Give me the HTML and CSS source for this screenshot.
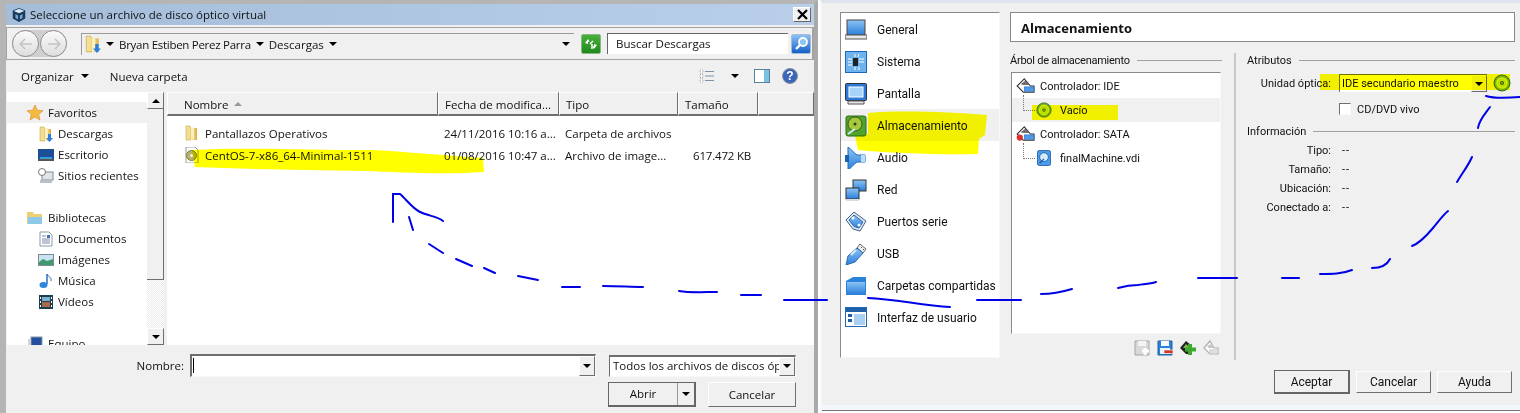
FILE: index.html

```html
<!DOCTYPE html>
<html lang="es">
<head>
  <meta charset="UTF-8" />
  <title>Seleccione un archivo de disco óptico virtual</title>
  <link rel="stylesheet" href="styles.css">
</head>
<body>

<svg class="defs" width="0" height="0">
  <defs>
    <linearGradient id="folderFill" x1="0" y1="0" x2="1" y2="0">
      <stop offset="0" stop-color="#f6e7a6"/><stop offset="0.6" stop-color="#e9c968"/><stop offset="1" stop-color="#d4ab45"/>
    </linearGradient>
    <linearGradient id="blueFill" x1="0" y1="0" x2="0" y2="1">
      <stop offset="0" stop-color="#8cc4f4"/><stop offset="1" stop-color="#2a7fdc"/>
    </linearGradient>
    <radialGradient id="discFill">
      <stop offset="0" stop-color="#f4f7a0"/><stop offset="0.55" stop-color="#a6d63c"/><stop offset="1" stop-color="#5f9e1c"/>
    </radialGradient>
    <symbol id="folder" viewBox="0 0 16 16">
      <path d="M2 1h4l1 2v12H2z" fill="#f3dd8f" stroke="#c9a84e" stroke-width="0.6"/>
      <path d="M7 3h6v12H7z" fill="url(#folderFill)"/>
      <path d="M7 3l3-1v12l-3 1z" fill="#fbf0bd"/>
    </symbol>
    <symbol id="disc" viewBox="0 0 18 18">
      <circle cx="9" cy="9" r="8" fill="url(#discFill)" stroke="#3f6f12"/>
      <circle cx="9" cy="9" r="5" fill="none" stroke="#e4f27a" stroke-width="1.2"/>
      <circle cx="9" cy="9" r="2" fill="#2f5c10"/>
      <circle cx="9" cy="9" r="0.8" fill="#e8f59a"/>
    </symbol>
    <symbol id="ctrl" viewBox="0 0 22 18">
      <path d="M9 1L1 9l7 7h12V9h-4z" fill="#fff" stroke="#333" stroke-width="1.2"/>
      <path d="M5 7l5-4 5 5H8z" fill="#6d6d6d"/>
      <rect x="9" y="10" width="11" height="5" fill="#4d9be8" stroke="#1d5fae" stroke-width="0.6"/>
    </symbol>
  </defs>
</svg>

<div class="screen">

  <div class="file-dialog">
    <div class="title-bar">
      <svg class="vbox-icon" width="18" height="18" viewBox="0 0 18 18"><path d="M9 1l7 3v9l-7 4-7-4V4z" fill="#16395e"/><path d="M9 2L3 4.500 9 7l6-2.500z" fill="#dbe6f2"/><path d="M5 8l3 1.500V14l-3-1.500zM13 8l-3 1.500V14l3-1.500z" fill="#7fa4c9"/></svg>
      <span>Seleccione un archivo de disco óptico virtual</span>
      <button class="close-btn">
        <svg width="11" height="11" viewBox="0 0 11 11"><path d="M1 1l9 9M10 1l-9 9" stroke="#000" stroke-width="2.200"/></svg>
      </button>
    </div>

    <div class="address-row">
      <div class="nav-circles">
        <span class="nav-circle"><svg width="14" height="12" viewBox="0 0 14 12"><path d="M6 1L1 6l5 5M1 6h12" fill="none" stroke="#c4c4c4" stroke-width="1.500"/></svg></span>
        <span class="nav-circle"><svg width="14" height="12" viewBox="0 0 14 12"><path d="M8 1l5 5-5 5M13 6H1" fill="none" stroke="#c4c4c4" stroke-width="1.500"/></svg></span>
      </div>
      <div class="breadcrumb">
        <svg width="18" height="18" viewBox="0 0 16 16"><use href="#folder"/><path d="M10 8h3v4h2l-3.500 4L8 12h2z" fill="#2a7fdc"/></svg>
        <i class="arrow crumb-first"></i>
        <span class="crumb-name">Bryan Estiben Perez Parra</span>
        <i class="arrow"></i>
        <span>Descargas</span>
        <i class="arrow"></i>
        <i class="arrow crumb-end"></i>
      </div>
      <span class="refresh-btn">
        <svg width="14" height="12" viewBox="0 0 14 12"><path d="M1 5l3-4 1.500 2.500L4 4v2zM13 7l-3 4-1.500-2.500L10 8V6z" fill="#fff"/><path d="M6 6l3-3M8 6v5" stroke="#fff" stroke-width="1.500"/></svg>
      </span>
      <div class="search-box">Buscar Descargas</div>
      <span class="search-btn">
        <svg width="15" height="15" viewBox="0 0 15 15"><circle cx="9" cy="6" r="4" fill="#8ec5f2" stroke="#fff" stroke-width="1.800"/><path d="M6 9l-4 4" stroke="#fff" stroke-width="2.400"/></svg>
      </span>
    </div>

    <div class="tool-row">
      <span class="tool-text">Organizar</span><i class="arrow tool-arrow"></i>
      <span class="tool-text">Nueva carpeta</span>
      <span class="tool-right">
        <svg width="16" height="14" viewBox="0 0 16 14"><path d="M1 1h3v3H1zM1 5.500h3v3H1zM1 10h3v3H1z" fill="#fff" stroke="#8a8f96" stroke-dasharray="1 1" stroke-width="0.8"/><path d="M6 2.500h9M6 7h9M6 11.500h9" stroke="#7d8ea6"/></svg>
        <i class="arrow view-arrow"></i>
        <svg width="16" height="14" viewBox="0 0 16 14"><rect x="0.500" y="0.500" width="15" height="13" fill="#fff" stroke="#5b7f9c"/><rect x="10" y="1" width="5" height="12" fill="#79c3e0"/></svg>
        <svg class="help-icon" width="16" height="16" viewBox="0 0 16 16"><circle cx="8" cy="8" r="7.500" fill="#3a65b8" stroke="#8d9096"/><text x="8" y="12" text-anchor="middle" class="help-mark">?</text></svg>
      </span>
    </div>

    <div class="browser">
      <div class="nav-pane">
        <div class="nav-list">
          <div class="nav-item nav-head nav-selected">
            <svg width="16" height="16" viewBox="0 0 16 16"><path d="M8 0l2.300 5.200 5.700.5-4.300 3.700 1.300 5.600L8 12l-5 3 1.300-5.600L0 5.700l5.700-.5z" fill="#f5b93f" stroke="#d8892a" stroke-width="0.6"/></svg>
            Favoritos
          </div>
          <div class="nav-item"><svg width="16" height="16"><use href="#folder"/><path d="M10 8h3v4h2l-3.500 4L8 12h2z" fill="#2a7fdc"/></svg>Descargas</div>
          <div class="nav-item"><svg width="16" height="16" viewBox="0 0 16 16"><rect y="2" width="16" height="10" fill="#1c4f96"/><path d="M2 10h12v2H2z" fill="#37a0d8"/><rect y="12" width="16" height="2" fill="#555"/></svg>Escritorio</div>
          <div class="nav-item"><svg width="16" height="16" viewBox="0 0 16 16"><rect x="4" y="4" width="11" height="8" fill="#dfe5ea" stroke="#7f8a93"/><rect x="2" y="12" width="12" height="3" fill="#b9c1c8"/><circle cx="4" cy="4" r="3.500" fill="#fff" stroke="#777"/></svg>Sitios recientes</div>
          <div class="nav-gap"></div>
          <div class="nav-item nav-head">
            <svg width="16" height="16" viewBox="0 0 16 16"><path d="M0 2h6l1 2h8v10H0z" fill="#f0cf72"/><path d="M1 7h14v7H1z" fill="#8ec9ea"/></svg>
            Bibliotecas
          </div>
          <div class="nav-item"><svg width="16" height="16" viewBox="0 0 16 16"><path d="M2 1h9l3 3v11H2z" fill="#fff" stroke="#8d99a8"/><path d="M4 5h4M4 8h8M4 10h8M4 12h8" stroke="#7b8ca3"/><rect x="9" y="4" width="3" height="3" fill="#3b74b6"/></svg>Documentos</div>
          <div class="nav-item"><svg width="16" height="16" viewBox="0 0 16 16"><rect x="0.500" y="2.500" width="15" height="11" fill="#c9e3f2" stroke="#7f8a93"/><path d="M1 10l4-3 4 2 6-2v6H1z" fill="#3f9b6c"/></svg>Imágenes</div>
          <div class="nav-item"><svg width="16" height="16" viewBox="0 0 16 16"><path d="M9 1v10" stroke="#2a6fc4" stroke-width="1.500"/><path d="M9 1c1 3 5 3 4 7" fill="none" stroke="#2a6fc4"/><ellipse cx="5.500" cy="12" rx="4" ry="3" fill="#2f86e0"/></svg>Música</div>
          <div class="nav-item"><svg width="16" height="16" viewBox="0 0 16 16"><rect x="1" y="1" width="14" height="14" fill="#1b3f4f"/><path d="M4 3h8v4H4z" fill="#7fb2cf"/><path d="M4 8h8v5H4z" fill="#a86a4a"/><path d="M2 3h1v2H2zM2 7h1v2H2zM2 11h1v2H2zM13 3h1v2h-1zM13 7h1v2h-1zM13 11h1v2h-1z" fill="#fff"/></svg>Vídeos</div>
          <div class="nav-gap"></div>
          <div class="nav-item nav-head">
            <svg width="16" height="16" viewBox="0 0 16 16"><rect x="4" y="1" width="11" height="9" fill="#234f9c" stroke="#8a97a8"/><rect x="1" y="3" width="3" height="9" fill="#cfd6dc"/></svg>
            Equipo
          </div>
        </div>
        <div class="scrollbar">
          <span class="scroll-btn"><i class="arrow arrow-up"></i></span>
          <span class="scroll-thumb"></span>
          <span class="scroll-track"></span>
          <span class="scroll-btn"><i class="arrow"></i></span>
        </div>
      </div>

      <div class="file-pane">
        <div class="file-head">
          <div class="head-cell head-name">Nombre <i class="arrow arrow-up sort-mark"></i></div>
          <div class="head-cell">Fecha de modifica...</div>
          <div class="head-cell">Tipo</div>
          <div class="head-cell">Tamaño</div>
          <div class="head-cell"></div>
        </div>
        <div class="file-row">
          <div class="file-name"><svg width="16" height="16"><use href="#folder"/></svg>Pantallazos Operativos</div>
          <div>24/11/2016 10:16 a...</div>
          <div>Carpeta de archivos</div>
          <div></div>
        </div>
        <div class="file-row">
          <div class="file-name"><svg width="16" height="16" viewBox="0 0 16 16"><path d="M2 0h9l3 3v13H2z" fill="#fff" stroke="#9a9a9a"/><circle cx="7.500" cy="8.500" r="5" fill="#b7b46a" stroke="#7a7a3c"/><circle cx="7.500" cy="8.500" r="1.500" fill="#eee"/></svg>CentOS-7-x86_64-Minimal-1511</div>
          <div>01/08/2016 10:47 a...</div>
          <div>Archivo de image...</div>
          <div class="file-size">617.472 KB</div>
        </div>
      </div>
    </div>

    <div class="dialog-bottom">
      <div class="name-line">
        <label class="name-label">Nombre:</label>
        <div class="name-input"><span class="caret"></span><span class="drop-btn"><i class="arrow"></i></span></div>
        <div class="type-select"><span class="type-text">Todos los archivos de discos óp</span><span class="drop-btn"><i class="arrow"></i></span></div>
      </div>
      <div class="action-line">
        <div class="split-btn"><span class="split-main">Abrir</span><span class="split-side"><i class="arrow"></i></span></div>
        <button class="win-btn dialog-btn">Cancelar</button>
      </div>
    </div>
  </div>

  <div class="settings">
    <div class="settings-body">
      <ul class="side-list">
        <li><svg width="22" height="22" viewBox="0 0 22 22"><rect x="2" y="1" width="18" height="15" fill="url(#blueFill)" stroke="#444"/><path d="M0 16h22v4H0z" fill="#e8e8e8" stroke="#555"/></svg>General</li>
        <li><svg width="22" height="22" viewBox="0 0 22 22"><rect x="0.500" y="0.500" width="21" height="21" fill="#6db3ee" stroke="#1f68b8"/><rect x="8" y="7" width="5" height="8" fill="#222"/><path d="M3 8h4M3 11h4M3 14h4M14 8h5M14 11h5M10 3v3M14 3l-1 3M10 16v3M14 16v3" stroke="#fff"/></svg>Sistema</li>
        <li><svg width="22" height="22" viewBox="0 0 22 22"><rect x="0.500" y="0.500" width="21" height="17" rx="1" fill="#2a78d8" stroke="#333"/><rect x="4" y="4" width="14" height="10" fill="#a8d3f8" stroke="#fff"/><path d="M3 18h16v3H3z" fill="#e8e8e8" stroke="#555"/></svg>Pantalla</li>
        <li class="side-selected"><svg width="22" height="22" viewBox="0 0 22 22"><rect x="1" y="1" width="20" height="20" rx="2" fill="#52a32c" stroke="#2c6c14"/><circle cx="10" cy="9" r="7" fill="#a7c83c" stroke="#315f18"/><circle cx="10" cy="9" r="1.500" fill="#214a10"/><path d="M3 19l7-5" stroke="#cfe8ff" stroke-width="2"/></svg>Almacenamiento</li>
        <li><svg width="22" height="22" viewBox="0 0 22 22"><path d="M3 0c3 2 6 6 9 8h8v7h-8c-3 2-6 6-9 8z" fill="url(#blueFill)" stroke="#2268b5"/><rect x="0" y="8" width="4" height="7" fill="#1f5fae"/><rect x="16" y="8" width="4" height="7" fill="#b9dcf8"/></svg>Audio</li>
        <li><svg width="22" height="22" viewBox="0 0 22 22"><rect x="8" y="1" width="13" height="11" fill="url(#blueFill)" stroke="#333"/><rect x="1" y="9" width="13" height="11" fill="url(#blueFill)" stroke="#333"/><path d="M1 20h13v2H1z" fill="#ddd"/></svg>Red</li>
        <li><svg width="22" height="22" viewBox="0 0 22 22"><path d="M9 1l12 9-6 10-7-2L1 9z" fill="#dfe7ef" stroke="#45618a"/><path d="M9 4l9 7-4 6-5-1.500L4 9z" fill="url(#blueFill)" stroke="#2e6ab2"/><circle cx="8" cy="7" r="1.500" fill="#fff"/><circle cx="14" cy="14" r="1.500" fill="#fff"/></svg>Puertos serie</li>
        <li><svg width="22" height="22" viewBox="0 0 22 22"><path d="M15 1l6 5-3 4-6-5z" fill="#eee" stroke="#666"/><path d="M16 4l1 1M18 6l1 1" stroke="#555"/><path d="M12 5l6 5-8 9-9 3 2-9z" fill="url(#blueFill)" stroke="#2e6ab2"/><path d="M6 12l5-5" stroke="#d5e9fb" stroke-width="2"/></svg>USB</li>
        <li><svg width="22" height="22" viewBox="0 0 22 22"><path d="M1 6l7-4h13v18H1z" fill="#2a83d8"/><path d="M2 7h18v12H2z" fill="url(#blueFill)"/></svg>Carpetas compartidas</li>
        <li><svg width="22" height="22" viewBox="0 0 22 22"><rect x="0.500" y="0.500" width="21" height="19" fill="#fff" stroke="#1f68b8"/><rect x="1" y="1" width="20" height="4" fill="#1e5fa8"/><rect x="3" y="7" width="4" height="3" fill="#1e5fa8"/><rect x="3" y="12" width="4" height="3" fill="#1e5fa8"/><rect x="9" y="7" width="11" height="11" fill="#a8d0f5"/></svg>Interfaz de usuario</li>
      </ul>

      <div class="settings-main">
        <div class="page-title">Almacenamiento</div>
        <div class="columns">
          <div class="tree-col">
            <div class="group-title tree-title">Árbol de almacenamiento</div>
            <div class="tree-box">
              <div class="tree-row"><svg width="20" height="16"><use href="#ctrl"/></svg>Controlador: IDE</div>
              <div class="tree-row tree-child tree-selected"><svg width="16" height="16"><use href="#disc"/></svg>Vacío</div>
              <div class="tree-row"><svg width="20" height="16" viewBox="0 0 22 18"><use href="#ctrl" width="22" height="18"/><circle cx="4" cy="13" r="3.500" fill="#d9342b"/></svg>Controlador: SATA</div>
              <div class="tree-row tree-child tree-file"><svg width="14" height="16" viewBox="0 0 16 18"><rect x="0.500" y="0.500" width="15" height="17" rx="2" fill="#4b9be8" stroke="#1d5fae"/><circle cx="8" cy="8" r="5" fill="#d6eafb" stroke="#1d5fae"/><path d="M3 15l5-5" stroke="#1d5fae" stroke-width="1.500"/></svg>finalMachine.vdi</div>
            </div>
            <div class="tree-tools">
              <svg width="16" height="16" viewBox="0 0 16 16"><path d="M1 1h14v14H1z" fill="#d8d8d8" stroke="#a5a5a5"/><rect x="4" y="1" width="8" height="5" fill="#f4f4f4"/><path d="M11 8v7M8 11h7" stroke="#fff" stroke-width="3"/></svg>
              <svg width="16" height="16" viewBox="0 0 16 16"><path d="M1 1h14v14H1z" fill="#2a83d8" stroke="#1d5fae"/><rect x="4" y="1" width="8" height="5" fill="#fff"/><rect x="3" y="8" width="10" height="6" fill="#e8f2fb"/><rect x="7" y="10" width="9" height="3.500" fill="#d9342b" stroke="#fff" stroke-width="0.600"/></svg>
              <svg width="16" height="16" viewBox="0 0 16 16"><path d="M6 1L0 8l6 6h6V6z" fill="#222"/><path d="M3 8l3-4 4 4z" fill="#7fc04a"/><path d="M10 4v11M5 9.500h11" stroke="#3ea92c" stroke-width="4"/></svg>
              <svg width="16" height="16" viewBox="0 0 16 16"><path d="M7 1L1 8l6 6h8V8h-4z" fill="#fff" stroke="#adadad" stroke-width="1.200"/><path d="M4 7l3-3 4 4H6z" fill="#c4c4c4"/><rect x="6" y="9" width="9" height="4" fill="#dcdcdc"/></svg>
            </div>
          </div>

          <div class="attr-col">
            <div class="group-title">Atributos</div>
            <div class="form-line">
              <span class="form-label">Unidad óptica:</span>
              <div class="drive-select"><span class="drive-text">IDE secundario maestro</span><span class="drop-btn"><i class="arrow"></i></span></div>
              <svg class="drive-disc" width="18" height="18"><use href="#disc"/></svg>
            </div>
            <div class="check-line"><span class="check-box"></span>CD/DVD vivo</div>
            <div class="group-title info-title">Información</div>
            <div class="info-line"><span class="form-label">Tipo:</span><span class="info-value">--</span></div>
            <div class="info-line"><span class="form-label">Tamaño:</span><span class="info-value">--</span></div>
            <div class="info-line"><span class="form-label">Ubicación:</span><span class="info-value">--</span></div>
            <div class="info-line"><span class="form-label">Conectado a:</span><span class="info-value">--</span></div>
          </div>
        </div>
        <div class="button-line">
          <button class="win-btn settings-btn default-btn">Aceptar</button>
          <button class="win-btn settings-btn">Cancelar</button>
          <button class="win-btn settings-btn">Ayuda</button>
        </div>
      </div>
    </div>
    <div class="settings-foot"></div>
  </div>

  <!-- marker and pen annotations drawn over the screenshot -->
  <svg class="marker" width="1520" height="413" viewBox="0 0 1520 413">
    <path d="M192 150C240 147 300 150 372 150C410 152 450 156 483 158L484 172C440 175 400 172 365 171C300 170 240 169 195 167Z" fill="#ffff00"/>
    <path d="M868 113C900 110 950 112 987 115L985 135L979 139L978 154C940 155 890 153 858 150L855 136L868 134Z" fill="#ffff00"/>
    <path d="M1032 105H1118V120H1032Z" fill="#ffff00"/>
    <path d="M1320 74H1510V90H1320Z" fill="#ffff00"/>
  </svg>
  <svg class="pen" width="1520" height="413" viewBox="0 0 1520 413">
    <g fill="none" stroke="#0000e6" stroke-width="2" stroke-linecap="round">
      <path d="M393 222L393 194H400C406 199 412 208 420 212C428 216 437 216 443 221"/>
      <path d="M409 217L413 230"/>
      <path d="M429 244L443 253"/>
      <path d="M456 259L472 266"/>
      <path d="M484 268L495 273"/>
      <path d="M518 276L538 280"/>
      <path d="M562 287H580"/>
      <path d="M603 286C620 286 630 287 643 287"/>
      <path d="M679 291C690 293 705 292 717 292"/>
      <path d="M741 295H761"/>
      <path d="M784 300H827"/>
      <path d="M868 298C895 299 920 305 950 307"/>
      <path d="M977 300H1021"/>
      <path d="M1041 294C1052 294 1062 292 1072 289"/>
      <path d="M1118 288C1125 286 1130 285 1138 285C1145 284 1150 284 1156 282"/>
      <path d="M1198 278H1237"/>
      <path d="M1282 278H1299"/>
      <path d="M1320 274C1332 274 1342 274 1352 270"/>
      <path d="M1372 268C1380 268 1387 265 1390 259"/>
      <path d="M1412 246C1420 243 1428 234 1433 228C1438 222 1443 215 1448 211"/>
      <path d="M1457 182C1463 172 1468 166 1472 157"/>
      <path d="M1478 128C1479 120 1485 114 1490 107"/>
      <path d="M1486 96C1495 99 1508 98 1520 97"/>
    </g>
  </svg>

</div>

</body>
</html>
```

FILE: styles.css

```css
html, body {
  margin: 0;
  padding: 0;
  background: #fff;
}
body {
  font-family: 'Open Sans', 'Noto Sans', sans-serif;
  font-size: 11px;
  color: #111;
}
svg {
  flex: none;
  display: block;
}
.defs {
  position: absolute;
}
.screen {
  position: relative;
  display: flex;
  width: 1520px;
  height: 413px;
  overflow: hidden;
}
.marker, .pen {
  position: absolute;
  left: 0;
  top: 0;
  pointer-events: none;
}
.marker {
  mix-blend-mode: multiply;
}

/* little black triangle used everywhere */
.arrow {
  display: inline-block;
  flex: none;
  width: 0;
  height: 0;
  border-left: 4px solid transparent;
  border-right: 4px solid transparent;
  border-top: 4px solid #000;
}
.arrow-up {
  border-top: 0;
  border-bottom: 4px solid #000;
}

/* left dialog */
.file-dialog {
  box-sizing: border-box;
  width: 818px;
  height: 413px;
  display: flex;
  flex-direction: column;
  flex: none;
  background: #f0f0f0;
  border-left: 6px solid #b5b5b5;
  border-top: 4px solid #b5b5b5;
  border-right: 4px solid #a9a9a9;
}
.title-bar {
  display: flex;
  align-items: center;
  height: 21px;
  padding-left: 5px;
  gap: 3px;
  background: linear-gradient(to right, #a5bdd9, #b9cfe9);
  font-size: 11.500px;
  flex: none;
}
.vbox-icon {
  width: 16px;
  height: 16px;
}
.close-btn {
  display: flex;
  align-items: center;
  justify-content: center;
  margin-left: auto;
  margin-right: 3px;
  width: 18px;
  height: 15px;
  padding: 0;
  background: #f0f0f0;
  border: 1px solid;
  border-color: #fff #666 #666 #fff;
}
.address-row {
  display: flex;
  align-items: center;
  box-sizing: border-box;
  height: 33px;
  margin-top: 2px;
  padding-left: 5px;
  border: 1px solid #a3a3a3;
  border-right-width: 2px;
  flex: none;
  background: #f0f0f0;
}
.nav-circles {
  display: flex;
  gap: 1px;
  width: 55px;
  border-radius: 14px;
  background: #cfcfcf;
}
.nav-circle {
  display: flex;
  align-items: center;
  justify-content: center;
  box-sizing: border-box;
  width: 27px;
  height: 27px;
  border-radius: 50%;
  border: 1px solid #8f8f8f;
  background: linear-gradient(#fafafa, #dedede);
}
.breadcrumb {
  display: flex;
  align-items: center;
  box-sizing: border-box;
  width: 493px;
  height: 22px;
  margin-left: 14px;
  padding-left: 2px;
  gap: 5px;
  border-left: 1px solid #9a9a9a;
  border-top: 1px solid #9a9a9a;
  font-size: 11.500px;
}
.crumb-first {
  margin-left: -1px;
}
.crumb-name {
  letter-spacing: -0.28px;
}
.crumb-end {
  margin-left: auto;
  margin-right: 4px;
}
.refresh-btn, .search-btn {
  display: flex;
  align-items: center;
  justify-content: center;
  box-sizing: border-box;
  width: 20px;
  height: 20px;
  border-radius: 2px;
  flex: none;
}
.refresh-btn {
  margin-left: 7px;
  background: linear-gradient(#49b03c, #1e8a1c);
  border: 1px solid #8ab48a;
}
.search-box {
  box-sizing: border-box;
  width: 181px;
  height: 21px;
  margin-left: 6px;
  padding: 2px 8px;
  background: #fff;
  border-left: 1px solid #666;
  border-top: 1px solid #666;
  font-size: 11.500px;
}
.search-btn {
  margin-left: 3px;
  background: linear-gradient(#8cc0f4, #1460c8);
  border: 1px solid #a8bcd4;
}
.tool-row {
  display: flex;
  align-items: center;
  height: 32px;
  padding-left: 15px;
  flex: none;
  font-size: 11.500px;
}
.tool-arrow {
  margin: 0 21px 0 7px;
}
.tool-right {
  display: flex;
  align-items: center;
  margin-left: auto;
  margin-right: 16px;
}
.view-arrow {
  margin: 0 15px 0 16px;
}
.help-icon {
  margin-left: 12px;
}
.help-mark {
  fill: #fff;
  font-family: 'Liberation Sans', sans-serif;
  font-size: 12px;
  font-weight: bold;
}

.browser {
  display: flex;
  flex: none;
  height: 253px;
  font-size: 11.500px;
}
.nav-pane {
  display: flex;
  width: 157px;
  margin-left: 1px;
  flex: none;
  background: #fff;
}
.nav-list {
  flex: 1;
  padding-top: 10px;
  overflow: hidden;
}
.nav-item {
  display: flex;
  align-items: center;
  gap: 4px;
  height: 21px;
  padding-left: 31px;
  white-space: nowrap;
}
.nav-head {
  padding-left: 20px;
  gap: 5px;
}
.nav-selected {
  background: #f0f0f0;
}
.nav-gap {
  height: 21px;
}
.scrollbar {
  display: flex;
  flex-direction: column;
  width: 17px;
  flex: none;
}
.scroll-btn {
  display: flex;
  align-items: center;
  justify-content: center;
  box-sizing: border-box;
  height: 17px;
  flex: none;
  background: #f0f0f0;
  border: 1px solid;
  border-color: #fff #6e6e6e #6e6e6e #fff;
}
.scroll-thumb {
  box-sizing: border-box;
  height: 171px;
  flex: none;
  background: #f0f0f0;
  border-right: 1px solid #6e6e6e;
  border-bottom: 1px solid #6e6e6e;
}
.scroll-track {
  flex: 1;
  background: repeating-conic-gradient(#fff 0 25%, #ececec 0 50%) 0 0 / 2px 2px;
}
.file-pane {
  flex: 1;
  margin-left: 3px;
  background: #fff;
}
.file-head {
  display: grid;
  grid-template-columns: 271px 121px 119px 80px 1fr;
  height: 24px;
  background: #f0f0f0;
}
.head-cell {
  display: flex;
  align-items: center;
  gap: 6px;
  box-sizing: border-box;
  padding: 1px 0 0 6px;
  border-top: 1px solid #fff;
  border-left: 1px solid #fff;
  border-right: 1px solid #6e6e6e;
  border-bottom: 2px solid #6e6e6e;
}
.head-name {
  padding-left: 16px;
}
.sort-mark {
  border-bottom-color: #9a9a9a;
}
.file-row {
  display: grid;
  grid-template-columns: 277px 121px 119px 67px;
  align-items: center;
  height: 22px;
}
.file-row:nth-child(2) {
  margin-top: 6px;
}
.file-name {
  display: flex;
  align-items: center;
  gap: 5px;
  padding-left: 17px;
  white-space: nowrap;
}
.file-size {
  text-align: right;
  letter-spacing: -0.2px;
}

.dialog-bottom {
  flex: 1;
  padding-top: 9px;
  font-size: 11.500px;
}
.name-line {
  display: flex;
  align-items: center;
  height: 23px;
}
.name-label {
  width: 178px;
  text-align: right;
}
.name-input {
  display: flex;
  align-items: stretch;
  justify-content: space-between;
  box-sizing: border-box;
  width: 406px;
  height: 23px;
  margin-left: 6px;
  background: #fff;
  border: 1px solid;
  border-color: #6e6e6e #f8f8f8 #f8f8f8 #6e6e6e;
  border-width: 2px 1px 1px 2px;
}
.caret {
  width: 1px;
  height: 15px;
  margin: 2px 0 0 1px;
  background: #000;
}
.drop-btn {
  display: flex;
  align-items: center;
  justify-content: center;
  box-sizing: border-box;
  width: 16px;
  flex: none;
  background: #f0f0f0;
  border: 1px solid;
  border-color: #fff #6e6e6e #6e6e6e #fff;
}
.type-select {
  display: flex;
  box-sizing: border-box;
  width: 187px;
  height: 22px;
  margin-left: 13px;
  background: #fff;
  border: 1px solid;
  border-color: #6e6e6e #f8f8f8 #f8f8f8 #6e6e6e;
  border-width: 2px 1px 1px 1px;
}
.type-text {
  flex: 1;
  padding: 1px 0 0 3px;
  overflow: hidden;
  white-space: nowrap;
}
.action-line {
  display: flex;
  margin-top: 5px;
  padding-left: 602px;
  gap: 12px;
}
.split-btn {
  display: flex;
  box-sizing: border-box;
  width: 88px;
  height: 25px;
  border: 1px solid #666;
  border-width: 1px 2px 2px 1px;
  background: #f0f0f0;
}
.split-main {
  flex: 1;
  text-align: center;
  line-height: 22px;
  border-right: 1px solid #9a9a9a;
}
.split-side {
  display: flex;
  align-items: center;
  justify-content: center;
  width: 16px;
}
.win-btn {
  box-sizing: border-box;
  padding: 0;
  background: #f0f0f0;
  border: 1px solid;
  border-color: #fff #6e6e6e #6e6e6e #fff;
  font: inherit;
  color: inherit;
}
.dialog-btn {
  width: 88px;
  height: 25px;
}

/* right settings window */
.settings {
  display: flex;
  flex-direction: column;
  flex: none;
  box-sizing: border-box;
  width: 702px;
  height: 413px;
  margin-left: 2px;
  background: #f0f0f0;
  border-top: 3px solid #dde4ee;
  border-left: 2px solid #f4f7fc;
  font-family: Roboto, 'Open Sans', sans-serif;
  font-size: 11px;
}
.settings-body {
  display: flex;
  flex: 1;
  padding: 9px 7px 0 18px;
  min-height: 0;
}
.settings-foot {
  height: 8px;
  flex: none;
  box-sizing: border-box;
  background: #fff;
  border-top: 5px solid #f3f6fb;
  box-shadow: inset 0 1px #777;
}
.side-list {
  box-sizing: border-box;
  width: 160px;
  height: 346px;
  margin: 0;
  padding: 0;
  list-style: none;
  flex: none;
  background: #fff;
  border-top: 1px solid #8a8a8a;
  border-left: 1px solid #8a8a8a;
  border-right: 1px solid #f8f8f8;
  border-bottom: 1px solid #f8f8f8;
  font-size: 12px;
}
.side-list li {
  display: flex;
  align-items: center;
  box-sizing: border-box;
  gap: 10px;
  height: 32px;
  padding: 2px 0 0 4px;
  white-space: nowrap;
}
.side-selected {
  background: #f0f0f0;
}
.settings-main {
  display: flex;
  flex-direction: column;
  flex: 1;
  margin-left: 10px;
}
.page-title {
  box-sizing: border-box;
  height: 30px;
  padding: 6px 0 0 10px;
  background: #fff;
  border: 1px solid #8a8a8a;
  font-family: 'Open Sans', sans-serif;
  font-size: 13px;
  font-weight: bold;
}
.columns {
  display: flex;
  height: 318px;
}
.tree-col {
  box-sizing: border-box;
  width: 226px;
  border-right: 2px solid #c8c8c8;
  padding-right: 12px;
  margin-top: 11px;
}
.group-title {
  display: flex;
  align-items: center;
  gap: 7px;
  height: 14px;
  white-space: nowrap;
}
.group-title::after {
  content: "";
  flex: 1;
  height: 1px;
  background: #a0a0a0;
}
.tree-title {
  letter-spacing: -0.25px;
}
.tree-box {
  box-sizing: border-box;
  height: 262px;
  margin: 5px 1px 0;
  padding-top: 1px;
  background: #fff;
  border-top: 1px solid #8a8a8a;
  border-left: 1px solid #8a8a8a;
  border-right: 1px solid #f8f8f8;
  border-bottom: 1px solid #f8f8f8;
}
.tree-row {
  display: flex;
  align-items: center;
  gap: 4px;
  height: 24px;
  padding-left: 4px;
  white-space: nowrap;
}
.tree-child {
  position: relative;
  padding-left: 24px;
  gap: 8px;
}
.tree-file {
  padding-left: 25px;
  gap: 9px;
}
.tree-child::before {
  content: "";
  position: absolute;
  left: 11px;
  top: -3px;
  width: 11px;
  height: 15px;
  border-left: 1px dotted #777;
  border-bottom: 1px dotted #777;
}
.tree-selected {
  background: #f0f0f0;
}
.tree-tools {
  display: flex;
  justify-content: flex-end;
  gap: 7px;
  margin-top: 6px;
  padding-right: 3px;
}
.attr-col {
  flex: 1;
  margin-top: 11px;
  padding-left: 11px;
}
.form-line {
  display: flex;
  align-items: center;
  height: 18px;
  margin-top: 7px;
}
.form-label {
  width: 84px;
  text-align: right;
  flex: none;
}
.drive-select {
  display: flex;
  justify-content: space-between;
  box-sizing: border-box;
  width: 148px;
  height: 18px;
  margin-left: 8px;
  padding-left: 2px;
  background: #fff;
  border-top: 1px solid #6e6e6e;
  border-left: 1px solid #6e6e6e;
}
.drive-text {
  align-self: center;
}
.drive-disc {
  margin-left: 6px;
}
.check-line {
  display: flex;
  align-items: center;
  gap: 6px;
  height: 16px;
  margin: 9px 0 0 92px;
}
.check-box {
  box-sizing: border-box;
  width: 12px;
  height: 12px;
  background: #fff;
  border: 1px solid;
  border-color: #6e6e6e #f8f8f8 #f8f8f8 #6e6e6e;
}
.info-title {
  margin-top: 7px;
}
.info-line {
  display: flex;
  gap: 11px;
  align-items: center;
  height: 19px;
}
.info-title + .info-line {
  margin-top: 3px;
}
.info-value {
  letter-spacing: 1px;
}
.button-line {
  display: flex;
  justify-content: flex-end;
  align-items: center;
  gap: 6px;
  margin-top: 10px;
  padding-right: 3px;
  font-size: 12px;
}
.settings-btn {
  width: 75px;
  height: 22px;
}
.default-btn {
  width: 76px;
  height: 24px;
  border: 1px solid #666;
  border-width: 1px 2px 2px 1px;
}
```
